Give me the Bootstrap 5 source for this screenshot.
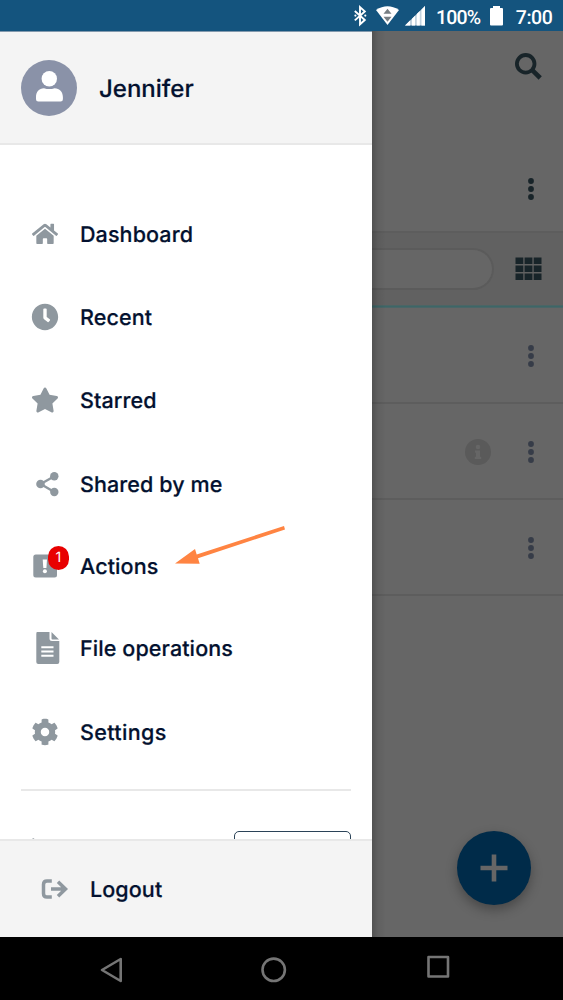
<!DOCTYPE html>
<html lang="en">
<head>
<meta charset="utf-8">
<meta name="viewport" content="width=device-width, initial-scale=1">
<title>Navigation drawer</title>
<link href="https://cdn.jsdelivr.net/npm/bootstrap@5.3.0/dist/css/bootstrap.min.css" rel="stylesheet">
<style>
body{font-family:Inter,"Liberation Sans",sans-serif;font-weight:500;color:#03112f;height:1000px;overflow:hidden;background:#000;text-rendering:geometricPrecision}
svg{display:block;flex:none;overflow:visible}
.statusbar{height:31px;background:#14547e;padding-right:31px}
.workspace{height:906px}
.drawer{width:372px;background:#fff;border-top:1px solid #8299ad}
.drawer-head{height:113px;background:#f4f4f4;border-bottom:2px solid #e8e8e8;padding-left:21px}
.avatar{width:56px;height:56px;background:#8a92a8;margin-right:22px}
.person{font-size:24px;line-height:30px;padding-top:2px;-webkit-text-stroke:.2px #03112f}
.drawer-body{padding-top:48px}
.menu-rows{display:grid;grid-template-rows:83px 83px 84px 83px 82px 81px 87px}
.menu-link{padding-left:31px;color:#03112f;font-size:21.5px;letter-spacing:.1px;line-height:28px;text-decoration:none;-webkit-text-stroke:.2px #03112f}
.glyph{width:28px;height:28px;margin:0 21px 2px 0;fill:#8f989f}
.count{left:48px;top:20px;width:21px;height:24px;background:#e80000;color:#fff;font-size:14px;font-weight:400;line-height:24px;-webkit-text-stroke:0}
.rule{height:2px;background:#e8e8e8;margin:13px 21px 0}
.plan-row{margin:40px 21px 0 31px}
.outline-box{width:117px;height:40px;border:1.5px solid #2b4358;border-radius:5px}
.drawer-foot{height:98px;background:#f4f4f4;border-top:2px solid #e8e8e8;padding:2px 0 0 41px}
.backdrop-page{background:#666}
.edge{width:14px;background:linear-gradient(90deg,rgba(0,0,0,.2),rgba(0,0,0,.06) 45%,transparent)}
.top-tools{height:109px;padding:21px 21px 0}
.title-row{height:93px;border-bottom:2px solid #5d5d5d;padding:6px 28px 0}
.filter-row{height:72px;background:#616161;padding-right:21px}
.field{width:122px;height:42px;border:2px solid #5b5b5b;border-left:0;border-radius:0 21px 21px 0;background:#666}
.accent{height:3px;background:linear-gradient(#526464,#3d6667 50%,#526667)}
.file-row{height:96px;border-bottom:2px solid #5d5d5d;padding:2px 28px 0 0}
.info-dot{margin-right:36px}
.fab{right:32px;bottom:32px;width:74px;height:74px;background:#002b49;box-shadow:0 5px 12px rgba(0,0,0,.3)}
.softkeys{height:63px}
.pointer{left:172px;top:520px}
</style>
</head>
<body>
<header class="statusbar d-flex align-items-center justify-content-end">
  <svg width="182" height="31" viewBox="350 0 182 31" fill="#fff">
    <path d="M354.800 11l10 9-4.800 4.300V7.200l4.800 4.200-10 9" fill="none" stroke="#fff" stroke-width="1.900"/>
    <circle cx="355.400" cy="15.600" r="1.100"/><circle cx="365.300" cy="15.600" r="1.100"/>
    <path d="M376 10Q387.500 2.500 399 10L387.500 25Z"/>
    <path d="M387.500 8.800l4 5h-8zM387.500 21.800l4-5h-8z" fill="#777e82"/>
    <path d="M405 25.500L425 6v19.500z" fill="#c3d3df"/>
    <path d="M405 25.500l5-5v5zM412 18.800l3-3v9.700h-3zM416.800 14l3-3v14.500h-3zM421.500 9.400L425 6v19.500h-3.500z"/>
    <text x="436" y="23.700" font-family="Roboto" font-weight="500" font-size="19.500" textLength="45">100%</text>
    <path d="M493 6h7v2h2a1 1 0 0 1 1 1v15.500a1 1 0 0 1-1 1h-11a1 1 0 0 1-1-1V9a1 1 0 0 1 1-1h2z"/>
    <text x="515.800" y="23.700" font-family="Roboto" font-weight="500" font-size="19.500" textLength="37">7:00</text>
  </svg>
</header>

<main class="workspace d-flex">
  <aside class="drawer d-flex flex-column flex-shrink-0">
    <div class="drawer-head d-flex align-items-center flex-shrink-0">
      <div class="avatar rounded-circle">
        <svg width="56" height="56" fill="#fff"><circle cx="28.300" cy="18.800" r="7.700"/><path d="M15 37c0-5 3-8.800 8-8.800q5.300 1.800 10.600 0c5 0 8.300 3.800 8.300 8.800v2.300q0 2.300-2.300 2.300H17.300Q15 41.600 15 39.300z"/></svg>
      </div>
      <span class="person">Jennifer</span>
    </div>

    <div class="drawer-body flex-grow-1 overflow-hidden">
      <nav class="menu-rows">
        <a class="menu-link d-flex align-items-center" href="#"><svg class="glyph" viewBox="-22 -50 620 620"><path d="M280.370 148.260L96 300.110V464a16 16 0 0 0 16 16l112.060-.29a16 16 0 0 0 15.920-16V368a16 16 0 0 1 16-16h64a16 16 0 0 1 16 16v95.640a16 16 0 0 0 16 16.050L464 480a16 16 0 0 0 16-16V300L295.670 148.260a12.190 12.190 0 0 0-15.300 0zM571.600 251.470L488 182.560V44.050a12 12 0 0 0-12-12h-56a12 12 0 0 0-12 12v72.610L318.470 43a48 48 0 0 0-61 0L4.340 251.470a12 12 0 0 0-1.600 16.900l25.500 31A12 12 0 0 0 45.150 301l235.220-193.740a12.190 12.190 0 0 1 15.300 0L530.900 301a12 12 0 0 0 16.900-1.600l25.500-31a12 12 0 0 0-1.700-16.930z"/></svg>Dashboard</a>
        <a class="menu-link d-flex align-items-center" href="#"><svg class="glyph" viewBox="-8 -8 528 528"><path d="M256 8C119 8 8 119 8 256s111 248 248 248 248-111 248-248S393 8 256 8zm92.490 313l-20 25a16 16 0 0 1-22.490 2.500l-67-49.720a40 40 0 0 1-15-31.230V112a16 16 0 0 1 16-16h32a16 16 0 0 1 16 16v144l58 42.500a16 16 0 0 1 2.490 22.500z"/></svg>Recent</a>
        <a class="menu-link d-flex align-items-center" href="#"><svg class="glyph" viewBox="0 -32 576 576"><path d="M259.300 17.800L194 150.200 47.900 171.500c-26.200 3.800-36.700 36.100-17.700 54.600l105.700 103-25 145.500c-4.500 26.300 23.200 46 46.400 33.700L288 439.600l130.700 68.700c23.200 12.200 50.900-7.400 46.400-33.700l-25-145.500 105.700-103c19-18.500 8.500-50.800-17.700-54.600L382 150.200 316.700 17.800c-11.700-23.600-45.600-23.900-57.400 0z"/></svg>Starred</a>
        <a class="menu-link d-flex align-items-center" href="#"><svg class="glyph" viewBox="0 0 28 28"><path d="M23.300 6.300L9.700 14l13.600 8" fill="none" stroke="#8f989f" stroke-width="2.400"/><circle cx="23.300" cy="6.200" r="4.200"/><circle cx="9.500" cy="14" r="4.300"/><circle cx="23.300" cy="22" r="4.200"/></svg>Shared by me</a>
        <a class="menu-link d-flex align-items-center position-relative" href="#"><svg class="glyph" viewBox="0 0 28 28"><rect x="2.300" y="2.500" width="23.700" height="23" rx="2.500"/><path d="M11.700 7.500h4.300l-.6 8.500h-3.100z" fill="#fff"/><circle cx="13.900" cy="19.300" r="2" fill="#fff"/></svg>Actions<span class="count position-absolute rounded-pill text-center">1</span></a>
        <a class="menu-link d-flex align-items-center" href="#"><svg class="glyph" viewBox=".5 0 28 28"><path d="M6.500-2H19v6.500q0 2.500 2.500 2.500h7.300v21q0 2-2 2h-19q-2 0-2-2V0q0-2 .7-2zM21-2l7.500 7.400H22q-1 0-1-1z"/><path d="M10.800 13.200H23M10.800 17.500H23M10.800 21.800H23" stroke="#fff" stroke-width="1.900"/></svg>File operations</a>
        <a class="menu-link d-flex align-items-center" href="#"><svg class="glyph" viewBox="-8 -8 528 528"><path d="M487.400 315.700l-42.600-24.600c4.300-23.200 4.300-47 0-70.200l42.600-24.600c4.900-2.800 7.100-8.600 5.500-14-11.100-35.600-30-67.800-54.700-94.600-3.800-4.100-10-5.100-14.800-2.300L380.800 110c-17.900-15.400-38.500-27.300-60.800-35.100V25.800c0-5.600-3.900-10.500-9.400-11.700-36.700-8.200-74.300-7.800-109.200 0-5.500 1.200-9.400 6.100-9.400 11.700V75c-22.200 7.900-42.800 19.800-60.800 35.100L88.700 85.500c-4.900-2.800-11-1.900-14.800 2.300-24.700 26.700-43.600 58.900-54.700 94.600-1.700 5.400.6 11.200 5.500 14L67.300 221c-4.300 23.200-4.300 47 0 70.200l-42.600 24.600c-4.900 2.800-7.100 8.600-5.500 14 11.100 35.600 30 67.800 54.700 94.600 3.800 4.100 10 5.100 14.800 2.300l42.600-24.600c17.900 15.400 38.500 27.300 60.800 35.100v49.200c0 5.600 3.900 10.500 9.400 11.700 36.700 8.200 74.300 7.800 109.200 0 5.500-1.200 9.400-6.100 9.400-11.700v-49.200c22.200-7.900 42.800-19.800 60.800-35.100l42.600 24.600c4.900 2.800 11 1.900 14.800-2.300 24.700-26.700 43.600-58.900 54.700-94.600 1.500-5.500-.7-11.300-5.600-14.100zM256 336c-44.100 0-80-35.900-80-80s35.900-80 80-80 80 35.900 80 80-35.900 80-80 80z"/></svg><span style="letter-spacing:.35px">Settings</span></a>
      </nav>
      <div class="rule"></div>
      <div class="plan-row d-flex justify-content-between">
        <svg width="28" height="28"><circle cx="2.300" cy="8.300" r="1.100" fill="#8f989f"/></svg>
        <div class="outline-box"></div>
      </div>
    </div>

    <div class="drawer-foot d-flex align-items-center flex-shrink-0">
      <a class="menu-link p-0 d-flex align-items-center" href="#"><svg class="glyph" viewBox="0 0 28 28"><path d="M10.800 5.900H6Q2.500 5.900 2.500 9.400v9Q2.500 22 6 22h4.800M10 14h14M17 6.800l7.500 7.200-7.500 7.200" fill="none" stroke="#8f989f" stroke-width="3.500"/></svg>Logout</a>
    </div>
  </aside>

  <section class="backdrop-page flex-grow-1 position-relative">
    <div class="top-tools d-flex justify-content-end align-items-start">
      <svg width="28" height="28" fill="none" stroke="#182429"><circle cx="11.700" cy="11.800" r="8.800" stroke-width="3.800"/><path d="M18.200 18.200L26.200 26" stroke-width="4.600"/></svg>
    </div>
    <div class="title-row d-flex align-items-center justify-content-end">
      <svg width="8" height="24" fill="#182429"><circle cx="4" cy="4" r="2.900"/><circle cx="4" cy="12" r="2.900"/><circle cx="4" cy="20" r="2.900"/></svg>
    </div>
    <div class="filter-row d-flex align-items-center justify-content-between">
      <div class="field"></div>
      <svg width="27" height="24" viewBox="0 .5 27 24" fill="#182429"><path d="M.5 1h7.800v6.500H.5zM9.600 1h7.800v6.500H9.600zM18.700 1h7.800v6.500h-7.800zM.5 9h7.800v6.500H.5zM9.600 9h7.800v6.500H9.600zM18.700 9h7.800v6.500h-7.800zM.5 17h7.800v6.500H.5zM9.600 17h7.800v6.500H9.600zM18.700 17h7.800v6.500h-7.800z"/></svg>
    </div>
    <div class="accent"></div>
    <div class="file-row d-flex align-items-center justify-content-end">
      <svg width="8" height="24" fill="#363c48"><circle cx="4" cy="4" r="2.900"/><circle cx="4" cy="12" r="2.900"/><circle cx="4" cy="20" r="2.900"/></svg>
    </div>
    <div class="file-row d-flex align-items-center justify-content-end">
      <svg class="info-dot" width="26" height="26"><circle cx="13" cy="13" r="13" fill="#5a5a5a"/><circle cx="13" cy="8" r="2.300" fill="#666"/><path d="M10 11.500h5v6.200h1.200v2.300h-6.400v-2.300H11v-4h-1z" fill="#666"/></svg>
      <svg width="8" height="24" fill="#363c48"><circle cx="4" cy="4" r="2.900"/><circle cx="4" cy="12" r="2.900"/><circle cx="4" cy="20" r="2.900"/></svg>
    </div>
    <div class="file-row d-flex align-items-center justify-content-end">
      <svg width="8" height="24" fill="#363c48"><circle cx="4" cy="4" r="2.900"/><circle cx="4" cy="12" r="2.900"/><circle cx="4" cy="20" r="2.900"/></svg>
    </div>
    <div class="fab position-absolute rounded-circle d-flex align-items-center justify-content-center">
      <svg width="28" height="28"><path d="M14 .5v27M.5 14h27" stroke="#666" stroke-width="4.600"/></svg>
    </div>
    <div class="edge position-absolute start-0 top-0 h-100"></div>
  </section>
</main>

<footer class="softkeys">
  <svg width="563" height="63" fill="none" stroke="#757575" stroke-width="2.600" stroke-linejoin="round"><path d="M102 33l18.700-11v22z"/><circle cx="273.700" cy="32.800" r="11.200"/><rect x="428.500" y="20" width="19.500" height="19.500"/></svg>
</footer>

<svg class="pointer position-absolute" width="116" height="50"><path d="M3 43.500L23 29l1.700 5.500L112 6l1 3.500L26 38.200l1.700 5.500z" fill="#ff8442"/></svg>
<script src="https://cdn.jsdelivr.net/npm/bootstrap@5.3.0/dist/js/bootstrap.bundle.min.js"></script>
</body>
</html>
